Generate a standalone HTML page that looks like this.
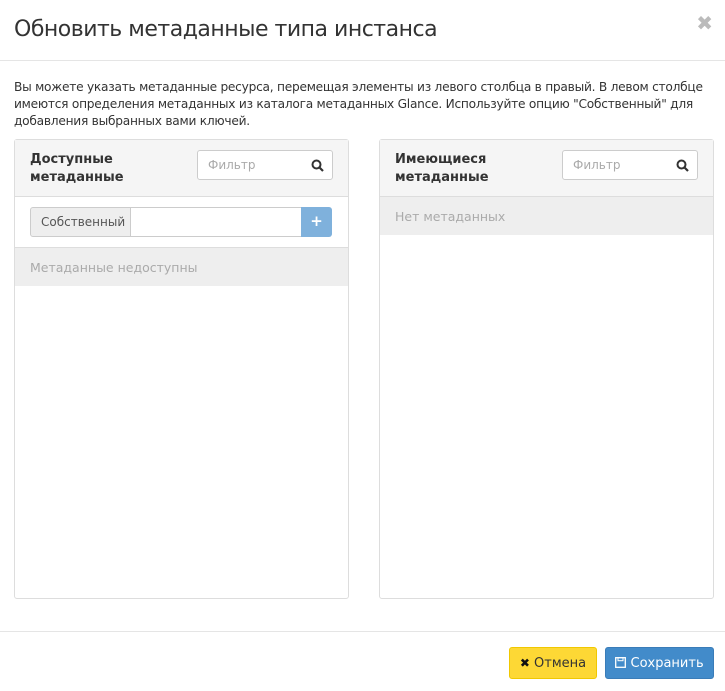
<!DOCTYPE html>
<html><head><meta charset="utf-8"><style>
*{box-sizing:border-box;margin:0;padding:0}
body{width:725px;height:691px;background:#fff;font-family:"DejaVu Sans","Liberation Sans",sans-serif;color:#333;position:relative;overflow:hidden}
.abs{position:absolute}
h1{position:absolute;left:14px;top:17px;font-size:22px;font-weight:normal;color:#333;font-family:"DejaVu Sans",sans-serif;letter-spacing:-0.5px}
.close{position:absolute;right:12px;top:11px;font-size:20px;color:#bbb;font-weight:bold}
.hr{position:absolute;left:0;width:725px;height:1px;background:#e5e5e5}
.desc{position:absolute;left:14px;top:79px;width:700px;font-size:12.2px;line-height:17px;color:#333;letter-spacing:-0.25px}
.panel{position:absolute;top:139px;width:335px;height:460px;border:1px solid #ddd;border-radius:3px;background:#fff}
.ph{height:57px;background:#f5f5f5;border-bottom:1px solid #ddd;position:relative}
.ph b{position:absolute;left:15px;top:11px;font-size:13px;line-height:18px;color:#333}
.filt{position:absolute;left:182px;top:10px;width:136px;height:30px;border:1px solid #ccc;border-radius:3px;background:#fff;font-size:12px;color:#aaa;padding:7px 0 0 10px}
.filt svg{position:absolute;right:8px;top:8px}
.empty{background:#eee;height:38px;font-size:12.5px;color:#aaa;padding:12px 15px}
</style></head><body>
<h1>Обновить метаданные типа инстанса</h1>
<div class="close">✖</div>
<div class="hr" style="top:60px"></div>
<div class="desc">Вы можете указать метаданные ресурса, перемещая элементы из левого столбца в правый. В левом столбце имеются определения метаданных из каталога метаданных Glance. Используйте опцию "Собственный" для добавления выбранных вами ключей.</div>

<div class="panel" style="left:14px">
 <div class="ph"><b>Доступные<br>метаданные</b>
  <div class="filt">Фильтр<svg width="13" height="13" viewBox="0 0 13 13"><circle cx="5.5" cy="5.5" r="4" fill="none" stroke="#333" stroke-width="2"/><line x1="8.5" y1="8.5" x2="12" y2="12" stroke="#333" stroke-width="2.2"/></svg></div></div>
 <div style="height:51px;border-bottom:1px solid #ddd;position:relative">
  <div class="abs" style="left:15px;top:10px;width:101px;height:30px;background:#eee;border:1px solid #ccc;border-radius:3px 0 0 3px;font-size:12px;color:#555;padding:7px 0 0 10px">Собственный</div>
  <div class="abs" style="left:115px;top:10px;width:172px;height:30px;border:1px solid #ccc;background:#fff"></div>
  <div class="abs" style="left:286px;top:10px;width:31px;height:30px;background:#7fb1dc;border-radius:0 3px 3px 0;color:#fff;font-weight:bold;font-size:15px;text-align:center;line-height:29px">+</div>
 </div>
 <div class="empty">Метаданные недоступны</div>
</div>

<div class="panel" style="left:379px">
 <div class="ph"><b>Имеющиеся<br>метаданные</b>
  <div class="filt">Фильтр<svg width="13" height="13" viewBox="0 0 13 13"><circle cx="5.5" cy="5.5" r="4" fill="none" stroke="#333" stroke-width="2"/><line x1="8.5" y1="8.5" x2="12" y2="12" stroke="#333" stroke-width="2.2"/></svg></div></div>
 <div class="empty">Нет метаданных</div>
</div>

<div class="hr" style="top:631px"></div>
<div class="abs" style="left:509px;top:647px;width:88px;height:32px;background:#fdd835;border:1px solid #f0c800;border-radius:3px;font-size:13px;color:#333;text-align:center;line-height:31px"><b style="font-size:12px;color:#111">✖</b> Отмена</div>
<div class="abs" style="left:605px;top:647px;width:109px;height:32px;background:#428bca;border:1px solid #3a7cb8;border-radius:3px;font-size:13px;color:#fff;text-align:center;line-height:31px"><svg width="11" height="11" viewBox="0 0 11 11" style="vertical-align:-1px"><rect x="0.7" y="0.7" width="9.6" height="9.6" fill="none" stroke="#fff" stroke-width="1.3"/><rect x="3" y="0.7" width="5" height="3" fill="none" stroke="#fff" stroke-width="1"/></svg> Сохранить</div>
</body></html>
